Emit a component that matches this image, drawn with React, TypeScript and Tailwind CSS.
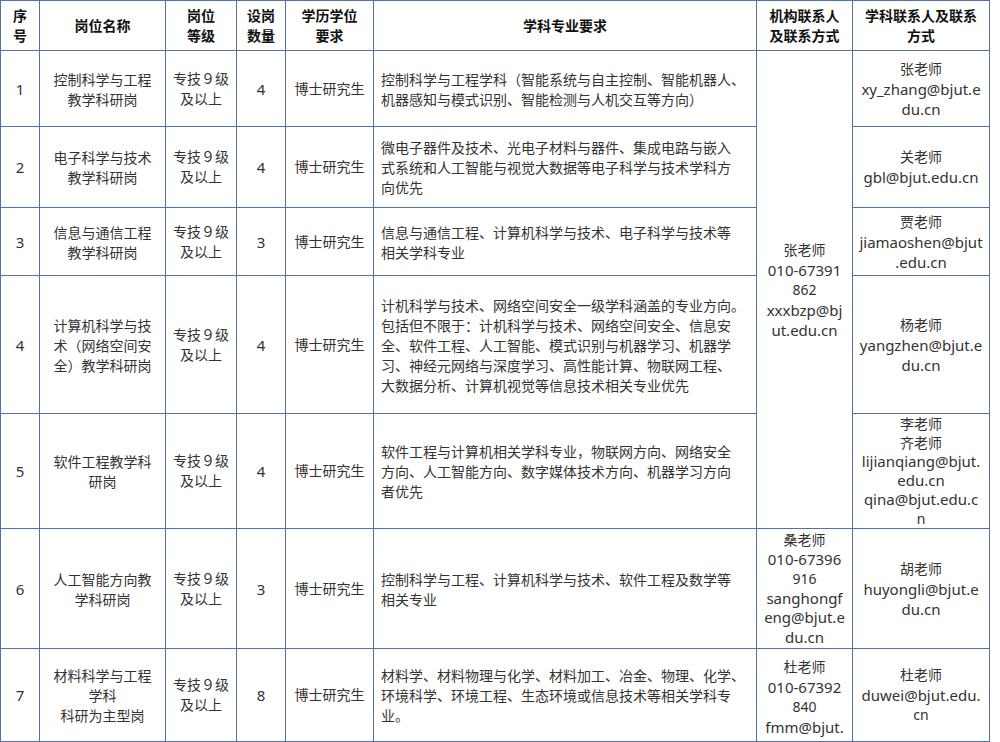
import React from "react";

type CellProps = {
  children?: React.ReactNode;
  className?: string;
};

function Cell({ children, className = "" }: CellProps) {
  return (
    <div
      className={
        "border-r border-b border-[#4f72aa] flex items-center justify-center text-center overflow-hidden whitespace-nowrap " +
        className
      }
    >
      <div>{children}</div>
    </div>
  );
}

function Lines({ text }: { text: string }) {
  const parts = text.split("\n");
  return (
    <>
      {parts.map((p, i) => {
        const ascii = /^[\x00-\x7f]+$/.test(p) && p.length > 3;
        return (
          <div key={i} className={ascii ? "text-[15px]" : ""}>
            {p}
          </div>
        );
      })}
    </>
  );
}

type Row = {
  no: string;
  name: string;
  count: string;
  req: string;
  subject: string;
};

const rows: Row[] = [
  {
    no: "1",
    name: "控制科学与工程\n教学科研岗",
    count: "4",
    req: "控制科学与工程学科（智能系统与自主控制、智能机器人、\n机器感知与模式识别、智能检测与人机交互等方向）",
    subject: "张老师\nxy_zhang@bjut.e\ndu.cn",
  },
  {
    no: "2",
    name: "电子科学与技术\n教学科研岗",
    count: "4",
    req: "微电子器件及技术、光电子材料与器件、集成电路与嵌入\n式系统和人工智能与视觉大数据等电子科学与技术学科方\n向优先",
    subject: "关老师\ngbl@bjut.edu.cn",
  },
  {
    no: "3",
    name: "信息与通信工程\n教学科研岗",
    count: "3",
    req: "信息与通信工程、计算机科学与技术、电子科学与技术等\n相关学科专业",
    subject: "贾老师\njiamaoshen@bjut\n.edu.cn",
  },
  {
    no: "4",
    name: "计算机科学与技\n术（网络空间安\n全）教学科研岗",
    count: "4",
    req: "计机科学与技术、网络空间安全一级学科涵盖的专业方向。\n包括但不限于：计机科学与技术、网络空间安全、信息安\n全、软件工程、人工智能、模式识别与机器学习、机器学\n习、神经元网络与深度学习、高性能计算、物联网工程、\n大数据分析、计算机视觉等信息技术相关专业优先",
    subject: "杨老师\nyangzhen@bjut.e\ndu.cn",
  },
  {
    no: "5",
    name: "软件工程教学科\n研岗",
    count: "4",
    req: "软件工程与计算机相关学科专业，物联网方向、网络安全\n方向、人工智能方向、数字媒体技术方向、机器学习方向\n者优先",
    subject: "李老师\n齐老师\nlijianqiang@bjut.\nedu.cn\nqina@bjut.edu.c\nn",
  },
  {
    no: "6",
    name: "人工智能方向教\n学科研岗",
    count: "3",
    req: "控制科学与工程、计算机科学与技术、软件工程及数学等\n相关专业",
    subject: "胡老师\nhuyongli@bjut.e\ndu.cn",
  },
  {
    no: "7",
    name: "材料科学与工程\n学科\n科研为主型岗",
    count: "8",
    req: "材料学、材料物理与化学、材料加工、冶金、物理、化学、\n环境科学、环境工程、生态环境或信息技术等相关学科专\n业。",
    subject: "杜老师\nduwei@bjut.edu.\ncn",
  },
];

const rowStart = [
  "row-start-2",
  "row-start-3",
  "row-start-4",
  "row-start-5",
  "row-start-6",
  "row-start-7",
  "row-start-8",
];

export default function App() {
  return (
    <div
      className="w-[1000px] h-[742px] bg-white overflow-hidden text-[14px] leading-[20px] text-[#333] [font-feature-settings:'chws'_0,'halt'_0] [text-spacing-trim:space-all]"
      style={{ fontFamily: '"Noto Sans", "Noto Sans CJK SC", sans-serif' }}
    >
      <div className="grid w-[990px] grid-cols-[39px_126px_71px_49px_88px_383px_96px_137px] grid-rows-[50px_76px_81px_68px_138px_115px_120px_93px] border-l border-t border-[#4f72aa]">
        {/* header */}
        <Cell className="col-start-1 row-start-1 font-bold text-[#111]">
          <Lines text={"序\n号"} />
        </Cell>
        <Cell className="col-start-2 row-start-1 font-bold text-[#111]">
          <Lines text={"岗位名称"} />
        </Cell>
        <Cell className="col-start-3 row-start-1 font-bold text-[#111]">
          <Lines text={"岗位\n等级"} />
        </Cell>
        <Cell className="col-start-4 row-start-1 font-bold text-[#111]">
          <Lines text={"设岗\n数量"} />
        </Cell>
        <Cell className="col-start-5 row-start-1 font-bold text-[#111]">
          <Lines text={"学历学位\n要求"} />
        </Cell>
        <Cell className="col-start-6 row-start-1 font-bold text-[#111]">
          <Lines text={"学科专业要求"} />
        </Cell>
        <Cell className="col-start-7 row-start-1 font-bold text-[#111]">
          <Lines text={"机构联系人\n及联系方式"} />
        </Cell>
        <Cell className="col-start-8 row-start-1 font-bold text-[#111]">
          <Lines text={"学科联系人及联系\n方式"} />
        </Cell>

        {rows.map((r, i) => (
          <React.Fragment key={r.no}>
            <Cell className={"col-start-1 text-[15px] " + rowStart[i]}>{r.no}</Cell>
            <Cell className={"col-start-2 font-['Noto_Sans_CJK_SC',sans-serif] " + rowStart[i]}>
              <Lines text={r.name} />
            </Cell>
            <Cell className={"col-start-3 " + rowStart[i]}>
              <Lines text={"专技９级\n及以上"} />
            </Cell>
            <Cell className={"col-start-4 text-[15px] " + rowStart[i]}>{r.count}</Cell>
            <Cell className={"col-start-5 " + rowStart[i]}>博士研究生</Cell>
            <Cell
              className={
                "col-start-6 !justify-start !text-left pl-[7px] font-['Noto_Sans_CJK_SC',sans-serif] " +
                rowStart[i]
              }
            >
              <Lines text={r.req} />
            </Cell>
            <Cell
              className={
                "col-start-8 " +
                rowStart[i] +
                (r.no === "5" ? " leading-[19px]" : "")
              }
            >
              <Lines text={r.subject} />
            </Cell>
          </React.Fragment>
        ))}

        {/* merged institution contact cell rows 1-5 */}
        <Cell className="col-start-7 row-start-2 row-end-7">
          <Lines text={"张老师\n010-67391\n862\nxxxbzp@bj\nut.edu.cn"} />
        </Cell>
        <Cell className="col-start-7 row-start-7 leading-[19.5px]">
          <Lines text={"桑老师\n010-67396\n916\nsanghongf\neng@bjut.e\ndu.cn"} />
        </Cell>
        <Cell className="col-start-7 row-start-8 !items-start pt-[8px]">
          <Lines text={"杜老师\n010-67392\n840\nfmm@bjut."} />
        </Cell>
      </div>
    </div>
  );
}
